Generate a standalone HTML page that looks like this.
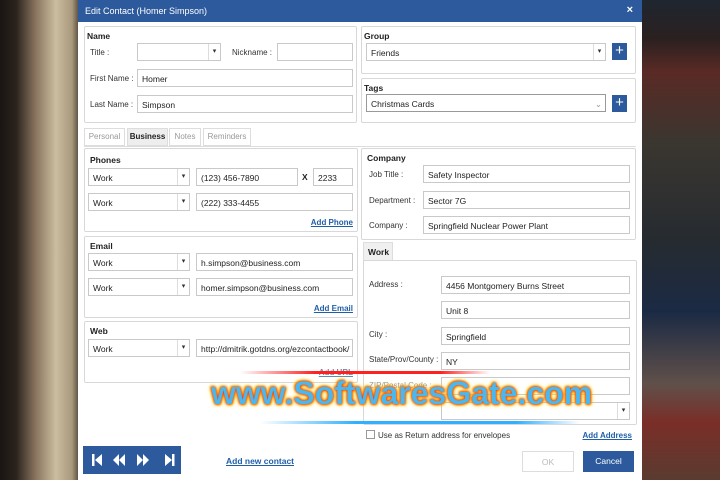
<!DOCTYPE html>
<html><head><style>
*{box-sizing:border-box;margin:0;padding:0}
body{width:720px;height:480px;overflow:hidden;position:relative;font-family:"Liberation Sans",sans-serif;font-size:8.5px;color:#222;background:#333}
.a{position:absolute}
.bgL{left:0;top:0;width:80px;height:480px;background:linear-gradient(90deg,#1a1512 0,#2a231d 20%,#8a7660 45%,#cbbd9f 70%,#a8987c 90%,#4a3f36 100%)}
.bgR{left:642px;top:0;width:78px;height:480px;background:linear-gradient(180deg,#1f2630 0,#2a2020 8%,#5a2a25 15%,#3a3630 30%,#262b30 50%,#1b2a44 65%,#60504a 80%,#7a2e28 88%,#5a3b30 100%)}
.dlg{left:78px;top:0;width:564px;height:480px;background:#fff}
.title{left:78px;top:0;width:564px;height:22px;background:#2c5a9c;color:#fff;font-size:9px;padding:6px 7px}
.box{position:absolute;border:1px solid #d8d8d8;border-radius:2px;background:#fff}
.h{position:absolute;font-weight:bold;font-size:8.5px}
.l{position:absolute;font-size:8px;color:#333}
.in{position:absolute;border:1px solid #c9c9c9;height:18px;padding:4px 4px;font-size:8.5px;background:#fff;white-space:nowrap;overflow:hidden}
.sel::after{content:"▾";position:absolute;right:0;top:0;width:11px;height:16px;border-left:1px solid #ddd;font-size:7px;text-align:center;line-height:16px;color:#333;background:#fff}
.plus{position:absolute;width:15px;height:17px;background:#2c5a9c;color:#fff;font-size:15px;line-height:16px;text-align:center}
.lk{position:absolute;color:#1f5fa8;text-decoration:underline;font-weight:bold;font-size:8px;text-align:right;white-space:nowrap}
.tab{position:absolute;top:128px;height:18px;border:1px solid #ddd;color:#999;font-size:8px;text-align:center;line-height:16px;background:#fff}
.btn{position:absolute;height:21px;font-size:8.5px;text-align:center;line-height:20px}
.wm{left:211px;top:375px;font-size:32px;font-weight:bold;color:#4cb6ee;white-space:nowrap;text-shadow:0 0 2px #ff2a00,0 0 3px #ff3a00,1px 1px 2px #ffd400,-1px -1px 2px #ffd400,0 0 6px #ffe000}
</style></head><body>
<div class="a bgL"></div><div class="a bgR"></div>
<div class="a dlg"></div>
<div class="a title">Edit Contact (Homer Simpson)<span style="position:absolute;right:9px;top:4px;font-size:11px;font-weight:bold">×</span></div>

<div class="box" style="left:84px;top:26px;width:273px;height:97px"></div>
<div class="h" style="left:87px;top:31px">Name</div>
<div class="l" style="left:90px;top:48px">Title :</div>
<div class="in sel" style="left:137px;top:43px;width:84px"></div>
<div class="l" style="left:232px;top:48px">Nickname :</div>
<div class="in" style="left:277px;top:43px;width:76px"></div>
<div class="l" style="left:90px;top:74px">First Name :</div>
<div class="in" style="left:137px;top:69px;width:216px">Homer</div>
<div class="l" style="left:90px;top:100px">Last Name :</div>
<div class="in" style="left:137px;top:95px;width:216px">Simpson</div>

<div class="box" style="left:361px;top:26px;width:275px;height:48px"></div>
<div class="h" style="left:364px;top:31px">Group</div>
<div class="in sel" style="left:366px;top:43px;width:240px">Friends</div>
<div class="plus" style="left:612px;top:43px">+</div>
<div class="box" style="left:361px;top:78px;width:275px;height:45px"></div>
<div class="h" style="left:364px;top:83px">Tags</div>
<div class="in" style="left:366px;top:94px;width:240px;border-color:#999">Christmas Cards<span style="position:absolute;right:3px;color:#999">⌄</span></div>
<div class="plus" style="left:612px;top:95px">+</div>

<div class="tab" style="left:84px;width:41px">Personal</div>
<div class="tab" style="left:127px;width:41px;background:#eee;color:#222;font-weight:bold">Business</div>
<div class="tab" style="left:169px;width:32px">Notes</div>
<div class="tab" style="left:203px;width:48px">Reminders</div>
<div class="a" style="left:84px;top:146px;width:552px;border-top:1px solid #ddd"></div>

<div class="box" style="left:84px;top:148px;width:274px;height:84px"></div>
<div class="h" style="left:90px;top:155px">Phones</div>
<div class="in sel" style="left:88px;top:168px;width:102px">Work</div>
<div class="in" style="left:196px;top:168px;width:102px">(123) 456-7890</div>
<div class="h" style="left:302px;top:172px">X</div>
<div class="in" style="left:313px;top:168px;width:40px">2233</div>
<div class="in sel" style="left:88px;top:193px;width:102px">Work</div>
<div class="in" style="left:196px;top:193px;width:157px">(222) 333-4455</div>
<div class="lk" style="right:367px;top:218px">Add Phone</div>

<div class="box" style="left:84px;top:236px;width:274px;height:82px"></div>
<div class="h" style="left:90px;top:241px">Email</div>
<div class="in sel" style="left:88px;top:253px;width:102px">Work</div>
<div class="in" style="left:196px;top:253px;width:157px">h.simpson@business.com</div>
<div class="in sel" style="left:88px;top:278px;width:102px">Work</div>
<div class="in" style="left:196px;top:278px;width:157px">homer.simpson@business.com</div>
<div class="lk" style="right:367px;top:304px">Add Email</div>

<div class="box" style="left:84px;top:321px;width:274px;height:62px"></div>
<div class="h" style="left:90px;top:326px">Web</div>
<div class="in sel" style="left:88px;top:339px;width:102px">Work</div>
<div class="in" style="left:196px;top:339px;width:157px">http://dmitrik.gotdns.org/ezcontactbook/</div>
<div class="lk" style="right:367px;top:368px;color:#6688aa">Add URL</div>

<div class="box" style="left:361px;top:148px;width:275px;height:92px"></div>
<div class="h" style="left:367px;top:153px">Company</div>
<div class="l" style="left:369px;top:170px">Job Title :</div>
<div class="in" style="left:423px;top:165px;width:207px">Safety Inspector</div>
<div class="l" style="left:369px;top:196px">Department :</div>
<div class="in" style="left:423px;top:191px;width:207px">Sector 7G</div>
<div class="l" style="left:369px;top:221px">Company :</div>
<div class="in" style="left:423px;top:216px;width:207px">Springfield Nuclear Power Plant</div>

<div class="a" style="left:363px;top:242px;width:30px;height:19px;background:#f0f0f0;border:1px solid #ddd;border-bottom:none;font-weight:bold;padding:4px 4px">Work</div>
<div class="box" style="left:363px;top:260px;width:274px;height:165px"></div>
<div class="l" style="left:369px;top:280px">Address :</div>
<div class="in" style="left:441px;top:276px;width:189px">4456 Montgomery Burns Street</div>
<div class="in" style="left:441px;top:301px;width:189px">Unit 8</div>
<div class="l" style="left:369px;top:330px">City :</div>
<div class="in" style="left:441px;top:327px;width:189px">Springfield</div>
<div class="l" style="left:369px;top:355px">State/Prov/County :</div>
<div class="in" style="left:441px;top:352px;width:189px">NY</div>
<div class="l" style="left:369px;top:381px;color:#999">ZIP/Postal Code :</div>
<div class="in" style="left:441px;top:377px;width:189px"></div>
<div class="in sel" style="left:441px;top:402px;width:189px"></div>
<div class="a" style="left:366px;top:430px;width:9px;height:9px;border:1px solid #999"></div>
<div class="l" style="left:378px;top:431px">Use as Return address for envelopes</div>
<div class="lk" style="right:88px;top:431px">Add Address</div>

<div class="a" style="left:83px;top:446px;width:98px;height:28px;background:#2c5a9c"></div>
<svg class="a" style="left:83px;top:446px" width="98" height="28" viewBox="0 0 98 28" fill="#fff">
<rect x="9" y="8" width="2.5" height="12"/><path d="M19 8 L12 14 L19 20Z"/>
<path d="M36 8 L30 14 L36 20Z M42 8 L36 14 L42 20Z"/>
<path d="M54 8 L60 14 L54 20Z M60 8 L66 14 L60 20Z"/>
<path d="M82 8 L89 14 L82 20Z"/><rect x="89" y="8" width="2.5" height="12"/>
</svg>
<div class="lk" style="left:226px;top:456px;font-size:8.5px">Add new contact</div>
<div class="btn" style="left:522px;top:451px;width:52px;border:1px solid #ddd;color:#bbb">OK</div>
<div class="btn" style="left:583px;top:451px;width:51px;background:#2c5a9c;color:#fff">Cancel</div>

<div class="a" style="left:240px;top:371px;width:250px;height:3px;background:linear-gradient(90deg,transparent,#ff2020 30%,#ff2020 80%,transparent)"></div>
<div class="a" style="left:260px;top:421px;width:320px;height:3px;background:linear-gradient(90deg,transparent,#30b0ff 30%,#30b0ff 80%,transparent)"></div>
<div class="a wm">www.SoftwaresGate.com</div>
</body></html>
